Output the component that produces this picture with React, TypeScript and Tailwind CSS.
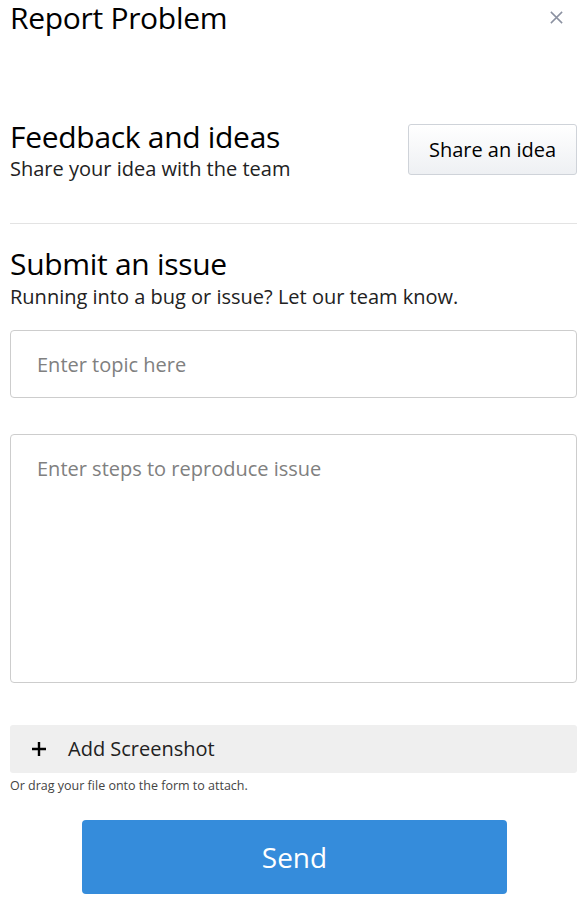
import React from "react";

export default function App() {
  const [topic, setTopic] = React.useState("");
  const [steps, setSteps] = React.useState("");

  return (
    <div className="min-h-screen bg-white pl-[10px] pr-[9px] text-black" style={{ fontFamily: '"Open Sans", "Noto Sans", sans-serif' }}>
      <div className="flex items-start justify-between">
        <h1 className="text-[30px] leading-[36px] font-normal tracking-[-0.3px]">Report Problem</h1>
        <button className="mt-[10px] mr-[13px] text-[#8b91a1]">
          <svg width="15" height="15" viewBox="0 0 16 16" fill="none" stroke="currentColor" strokeWidth="1.6">
            <path d="M2 2 14 14M14 2 2 14" />
          </svg>
        </button>
      </div>

      <div className="mt-[84px] flex items-start justify-between">
        <div>
          <h2 className="text-[30px] leading-[34px] font-normal tracking-[-0.3px]">Feedback and ideas</h2>
          <p className="text-[20px] leading-[30px] text-[#222]">Share your idea with the team</p>
        </div>
        <button className="mt-[4px] h-[51px] w-[169px] rounded-[3px] border border-[#cfd3d9] bg-gradient-to-b from-white to-[#eef0f3] text-[20px] text-black">
          Share an idea
        </button>
      </div>

      <div className="mt-[39px] border-t border-[#e3e3e3]" />

      <h2 className="mt-[23px] text-[30px] leading-[34px] font-normal tracking-[-0.3px]">Submit an issue</h2>
      <p className="text-[20px] leading-[32px] text-[#222]">Running into a bug or issue? Let our team know.</p>

      <input
        value={topic}
        onChange={(e) => setTopic(e.target.value)}
        placeholder="Enter topic here"
        className="mt-[17px] block h-[68px] w-full rounded-[4px] border border-[#cdcdcd] px-[26px] text-[20px] outline-none placeholder:text-[#808080]"
      />

      <textarea
        value={steps}
        onChange={(e) => setSteps(e.target.value)}
        placeholder="Enter steps to reproduce issue"
        className="mt-[36px] block h-[249px] w-full resize-none rounded-[4px] border border-[#cdcdcd] px-[26px] pt-[20px] text-[20px] leading-[28px] outline-none placeholder:text-[#808080]"
      />

      <button className="mt-[42px] flex h-[48px] w-full items-center rounded-[3px] bg-[#efefef] pl-[21px] text-[20px] text-[#222]">
        <svg width="16" height="16" viewBox="0 0 16 16" fill="none" stroke="black" strokeWidth="2.4">
          <path d="M8 1v14M1 8h14" />
        </svg>
        <span className="ml-[21px]">Add Screenshot</span>
      </button>
      <p className="mt-[5px] text-[12.5px] leading-[16px] text-[#444]">Or drag your file onto the form to attach.</p>

      <div className="mt-[26px] flex pl-[72px]">
        <button className="h-[74px] w-[425px] rounded-[4px] bg-[#358cdb] text-[28px] text-white">Send</button>
      </div>
    </div>
  );
}
